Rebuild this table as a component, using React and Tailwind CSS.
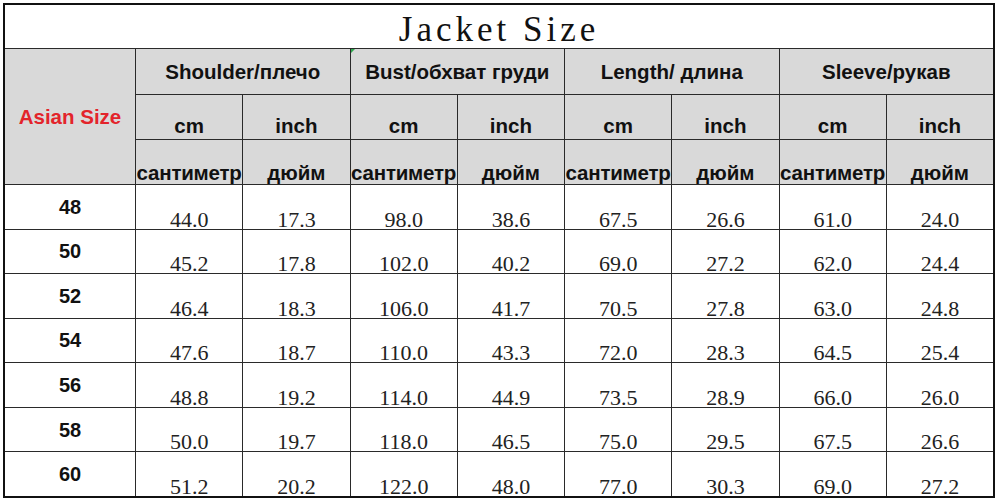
const groups = ["Shoulder/плечо", "Bust/обхват груди", "Length/ длина", "Sleeve/рукав"];

const rows = [
  ["48", "44.0", "17.3", "98.0", "38.6", "67.5", "26.6", "61.0", "24.0"],
  ["50", "45.2", "17.8", "102.0", "40.2", "69.0", "27.2", "62.0", "24.4"],
  ["52", "46.4", "18.3", "106.0", "41.7", "70.5", "27.8", "63.0", "24.8"],
  ["54", "47.6", "18.7", "110.0", "43.3", "72.0", "28.3", "64.5", "25.4"],
  ["56", "48.8", "19.2", "114.0", "44.9", "73.5", "28.9", "66.0", "26.0"],
  ["58", "50.0", "19.7", "118.0", "46.5", "75.0", "29.5", "67.5", "26.6"],
  ["60", "51.2", "20.2", "122.0", "48.0", "77.0", "30.3", "69.0", "27.2"],
];

const sans = "font-['Liberation_Sans',Arial,sans-serif]";
const serif = "font-['Liberation_Serif','Times_New_Roman',serif]";

export default function App() {
  return (
    <div className="w-[1000px] h-[503px] bg-white pt-[3px] pl-[3px] overflow-hidden">
      <div
        className={`w-[992px] h-[495px] border-2 border-[#111] bg-[#2a2a2a] grid grid-cols-[130px_repeat(8,1fr)] grid-rows-[43px_45px_44px_44px_repeat(7,1fr)] gap-px ${sans}`}
      >
        {/* title */}
        <div className="col-span-9 bg-white flex items-end justify-center pb-[1px]">
          <span className={`${serif} text-[35px] leading-none tracking-[4px] text-[#111]`}>Jacket Size</span>
        </div>

        {/* header */}
        <div className="row-span-3 bg-[#d9d9d9] flex items-center justify-center pt-[2px]">
          <span className="text-[20.5px] font-bold text-[#e3242b]">Asian Size</span>
        </div>
        {groups.map((g, i) => (
          <div key={g} className="col-span-2 bg-[#d9d9d9] flex items-center justify-center pt-[2px] relative">
            {i === 1 && (
              <span className="absolute top-0 left-0 w-0 h-0 border-t-[4px] border-r-[4px] border-t-[#2fa84f] border-r-transparent" />
            )}
            <span className="text-[20.5px] font-bold text-[#111] whitespace-nowrap">{g}</span>
          </div>
        ))}
        {groups.map((g) => [
          <div key={g + "cm"} className="bg-[#d9d9d9] flex items-end justify-center pb-[2px]">
            <span className="text-[20.5px] font-bold text-[#111] leading-[22px]">cm</span>
          </div>,
          <div key={g + "in"} className="bg-[#d9d9d9] flex items-end justify-center pb-[2px]">
            <span className="text-[20.5px] font-bold text-[#111] leading-[22px]">inch</span>
          </div>,
        ])}
        {groups.map((g) => [
          <div key={g + "sm"} className="bg-[#d9d9d9] flex items-end justify-center">
            <span className="text-[20.5px] font-bold text-[#111] leading-[22px] whitespace-nowrap tracking-[-0.2px]">сантиметр</span>
          </div>,
          <div key={g + "dm"} className="bg-[#d9d9d9] flex items-end justify-center">
            <span className="text-[20.5px] font-bold text-[#111] leading-[22px]">дюйм</span>
          </div>,
        ])}

        {/* data */}
        {rows.map((r) =>
          r.map((v, j) =>
            j === 0 ? (
              <div key={r[0] + j} className="bg-white flex items-center justify-center">
                <span className="text-[20px] font-bold text-[#111]">{v}</span>
              </div>
            ) : (
              <div key={r[0] + j} className="bg-white flex items-end justify-center">
                <span className={`${serif} text-[22px] leading-[18px] text-[#222]`}>{v}</span>
              </div>
            )
          )
        )}
      </div>
    </div>
  );
}
